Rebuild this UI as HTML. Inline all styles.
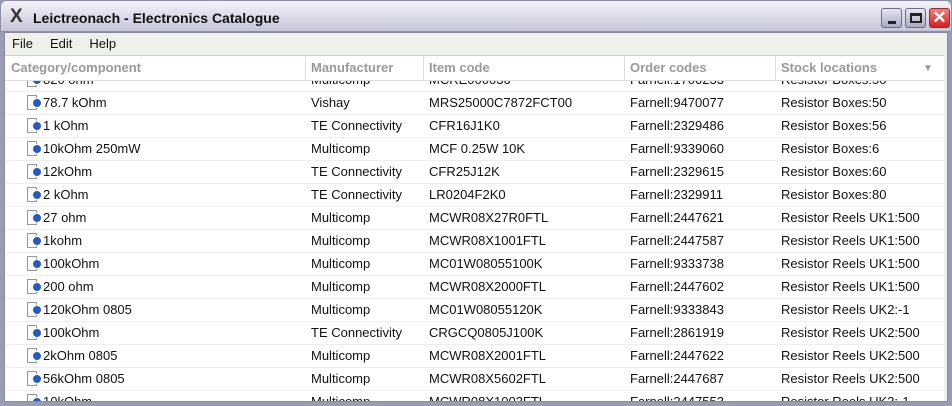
<!DOCTYPE html><html><head><style>
*{margin:0;padding:0;box-sizing:border-box}
body{width:952px;height:406px;overflow:hidden;background:#9a9cb4;font-family:"Liberation Sans",sans-serif;font-size:13px;position:relative}
#title{position:absolute;left:0;top:0;width:952px;height:32px;background:linear-gradient(#f4f4fa,#d6d7e6 60%,#c4c5d8);border-radius:6px 6px 0 0;border:1px solid #8c8ea8}
#title .t{position:absolute;left:32px;top:9px;font-weight:bold;font-size:14px;color:#111}
#title .x{position:absolute;left:9px;top:5px;font-size:19px;font-weight:bold;color:#333}
.b{position:absolute;top:7px;width:21px;height:20px;border-radius:3px;border:1px solid #6c6e88;background:linear-gradient(#e6e6f0,#a8aac0)}
#frame{position:absolute;left:4px;top:32px;width:944px;height:370px;background:#eef0eb;border:1px solid #8a8c9c}
#menu{height:22px;padding:3px 0 0 7px;color:#111}
#menu span{margin-right:17px}
#tbl{position:absolute;left:0;top:22px;width:939px;height:346px;background:#fff;border-top:1px solid #cfcfcf;overflow:hidden}
#hdr{position:absolute;top:0;left:0;width:939px;height:25px;background:#fff;border-bottom:1px solid #ddd;z-index:2}
.c{position:absolute;white-space:nowrap}
#hdr .c{top:4px;color:#999;font-weight:bold}
.sep{position:absolute;top:0;height:25px;border-left:1px solid #ddd}
.r{position:absolute;left:0;width:939px;height:23px;border-bottom:1px solid #eee}
.r .c{top:3px;color:#111}
.ic{position:absolute;left:22px;top:3px;width:10px;height:15px;border:1px solid #999;background:#fafafa}
.ic:after{content:"";position:absolute;left:4px;top:2px;width:8px;height:8px;border-radius:50%;background:#2a5ab8;border:1px solid #fff}
</style></head><body>
<div id="title"><span class="x">X</span><span class="t">Leictreonach - Electronics Catalogue</span>
<div class="b" style="left:880px"><div style="position:absolute;left:6px;top:12px;width:8px;height:3px;background:#222"></div></div>
<div class="b" style="left:904px"><div style="position:absolute;left:4px;top:4px;width:12px;height:10px;border:2px solid #222;border-top-width:3px"></div></div>
<div class="b" style="left:928px;background:linear-gradient(#f08080,#d02020);border-color:#903030;color:#fff;font-weight:bold;font-size:17px;text-align:center;line-height:18px">✕</div>
</div>
<div id="frame"><div id="menu"><span>File</span><span>Edit</span><span>Help</span></div>
<div id="tbl">
<div id="hdr"><span class="c" style="left:6px">Category/component</span><span class="c" style="left:306px">Manufacturer</span><span class="c" style="left:424px">Item code</span><span class="c" style="left:625px">Order codes</span><span class="c" style="left:776px">Stock locations</span><span class="c" style="left:918px;font-size:10px;top:7px">▼</span>
<div class="sep" style="left:300px"></div><div class="sep" style="left:418px"></div><div class="sep" style="left:619px"></div><div class="sep" style="left:770px"></div></div>
<div id="rows"></div>
</div></div>
<script>
var d=[["820 ohm","Multicomp","MCRE000036","Farnell:1700233","Resistor Boxes:50"],["78.7 kOhm","Vishay","MRS25000C7872FCT00","Farnell:9470077","Resistor Boxes:50"],["1 kOhm","TE Connectivity","CFR16J1K0","Farnell:2329486","Resistor Boxes:56"],["10kOhm 250mW","Multicomp","MCF 0.25W 10K","Farnell:9339060","Resistor Boxes:6"],["12kOhm","TE Connectivity","CFR25J12K","Farnell:2329615","Resistor Boxes:60"],["2 kOhm","TE Connectivity","LR0204F2K0","Farnell:2329911","Resistor Boxes:80"],["27 ohm","Multicomp","MCWR08X27R0FTL","Farnell:2447621","Resistor Reels UK1:500"],["1kohm","Multicomp","MCWR08X1001FTL","Farnell:2447587","Resistor Reels UK1:500"],["100kOhm","Multicomp","MC01W08055100K","Farnell:9333738","Resistor Reels UK1:500"],["200 ohm","Multicomp","MCWR08X2000FTL","Farnell:2447602","Resistor Reels UK1:500"],["120kOhm 0805","Multicomp","MC01W08055120K","Farnell:9333843","Resistor Reels UK2:-1"],["100kOhm","TE Connectivity","CRGCQ0805J100K","Farnell:2861919","Resistor Reels UK2:500"],["2kOhm 0805","Multicomp","MCWR08X2001FTL","Farnell:2447622","Resistor Reels UK2:500"],["56kOhm 0805","Multicomp","MCWR08X5602FTL","Farnell:2447687","Resistor Reels UK2:500"],["10kOhm","Multicomp","MCWR08X1003FTL","Farnell:2447553","Resistor Reels UK3:-1"]];
var h="",L=[38,306,424,625,776];
d.forEach(function(r,i){h+='<div class="r" style="top:'+(13+23*i)+'px"><div class="ic"></div>';r.forEach(function(t,j){h+='<span class="c" style="left:'+L[j]+'px">'+t+'</span>'});h+='</div>'});
document.getElementById('rows').innerHTML=h;
</script>
</body></html>
